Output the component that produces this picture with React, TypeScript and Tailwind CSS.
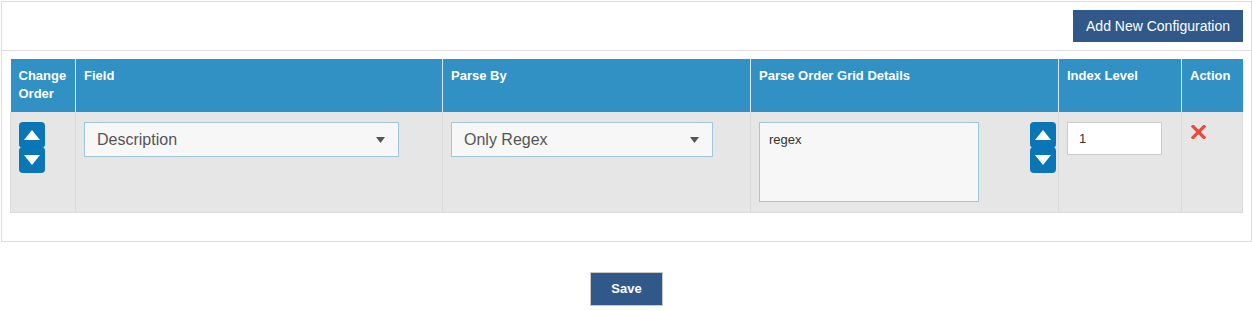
import React from 'react';

const font = { fontFamily: '"Liberation Sans", Arial, sans-serif' };

// stacked up/down arrows used to move rows
const OrderArrows: React.FC = () => (
  <div className="flex flex-col w-[26px]">
    <button className="h-[26px] w-[26px] bg-[#0a76b6] rounded-[4px] flex items-center justify-center">
      <svg width="16" height="10" viewBox="0 0 16 10">
        <polygon points="8,0 16,10 0,10" fill="#fff" />
      </svg>
    </button>
    <button className="h-[26px] w-[26px] -mt-[1px] bg-[#0a76b6] rounded-[4px] flex items-center justify-center">
      <svg width="16" height="10" viewBox="0 0 16 10">
        <polygon points="0,0 16,0 8,10" fill="#fff" />
      </svg>
    </button>
  </div>
);

const Select: React.FC<{ value: string; width: string }> = ({ value, width }) => (
  <div
    className={`${width} h-[35px] bg-[#f7f7f7] border border-[#9fc6da] flex items-center justify-between pl-[12px] pr-[13px] text-[16px] text-[#555]`}
  >
    <span>{value}</span>
    <svg width="9" height="6" viewBox="0 0 9 6">
      <polygon points="0,0 9,0 4.5,6" fill="#555" />
    </svg>
  </div>
);

const App: React.FC = () => {
  const headers = [
    { label: 'Change Order', w: 'w-[65px]' },
    { label: 'Field', w: 'w-[367px]' },
    { label: 'Parse By', w: 'w-[308px]' },
    { label: 'Parse Order Grid Details', w: 'w-[308px]' },
    { label: 'Index Level', w: 'w-[123px]' },
    { label: 'Action', w: 'w-[61px]' },
  ];

  return (
    <div className="w-[1252px] h-[311px] bg-white pt-px pl-px" style={font}>
      {/* Panel */}
      <div className="w-[1251px] border border-[#dddddd]">
        <div className="h-[49px] border-b border-[#dddddd] flex justify-end pt-[8px] pr-[8px]">
          <button className="h-[32px] px-[13px] bg-[#30598a] text-white text-[14px]">
            Add New Configuration
          </button>
        </div>

        <div className="pt-[8px] pl-[8px] pr-[7px] pb-[28px]">
          <table className="w-[1232px] table-fixed border-collapse">
            <thead>
              <tr className="bg-[#3190c4] text-white h-[53px]">
                {headers.map((h, i) => (
                  <th
                    key={h.label}
                    className={`${h.w} align-top text-left font-bold text-[13px] leading-[18px] pt-[8px] pl-[8px] pr-[4px] ${
                      i > 0 ? 'border-l border-[#d8e6ef]' : ''
                    }`}
                  >
                    {h.label}
                  </th>
                ))}
              </tr>
            </thead>
            <tbody>
              <tr className="bg-[#e6e6e6] h-[100px] border border-[#dadada] border-t-0">
                <td className="align-top pt-[10px] pl-[8px]">
                  <OrderArrows />
                </td>
                <td className="align-top pt-[10px] pl-[8px] border-l border-[#dadada]">
                  <Select value="Description" width="w-[315px]" />
                </td>
                <td className="align-top pt-[10px] pl-[8px] border-l border-[#dadada]">
                  <Select value="Only Regex" width="w-[262px]" />
                </td>
                <td className="align-top pt-[10px] pl-[8px] pr-[2px] border-l border-[#dadada]">
                  <div className="flex justify-between">
                    <div className="w-[220px] h-[80px] bg-[#f7f7f7] border border-[#9fc6da] pt-[7px] pl-[9px] text-[13px] text-[#333]">
                      regex
                    </div>
                    <OrderArrows />
                  </div>
                </td>
                <td className="align-top pt-[10px] pl-[8px] border-l border-[#dadada]">
                  <div className="w-[95px] h-[33px] bg-white border border-[#cccccc] flex items-center pl-[11px] text-[13px] text-[#333]">
                    1
                  </div>
                </td>
                <td className="align-top pt-[13px] pl-[9px] border-l border-[#dadada]">
                  <svg width="15" height="14" viewBox="0 0 15 14">
                    <path d="M2 1.5 L13 12.5 M13 1.5 L2 12.5" stroke="#e74c3c" strokeWidth="3.2" strokeLinecap="square" />
                  </svg>
                </td>
              </tr>
            </tbody>
          </table>
        </div>
      </div>

      <div className="flex justify-center pt-[30px]">
        <button className="w-[73px] h-[34px] bg-[#30598a] border border-[#c8c8c8] text-white text-[13px] font-bold">
          Save
        </button>
      </div>
    </div>
  );
};

export default App;
